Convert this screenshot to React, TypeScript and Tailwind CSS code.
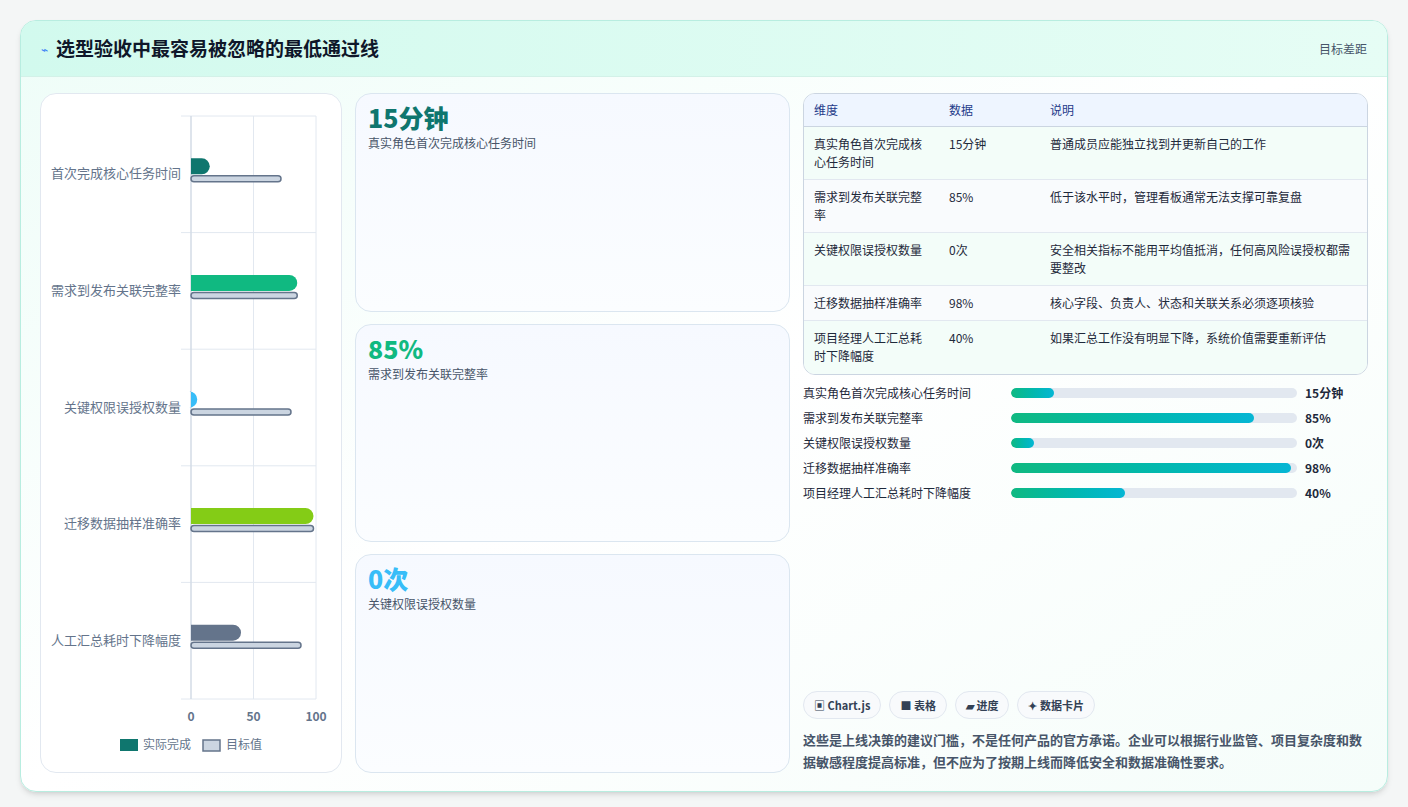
import React from "react";

const rows = [
  { label: "首次完成核心任务时间", a: 15, t: 72, c: "#0f766e" },
  { label: "需求到发布关联完整率", a: 85, t: 85, c: "#10b981" },
  { label: "关键权限误授权数量", a: 5, t: 80, c: "#38bdf8" },
  { label: "迁移数据抽样准确率", a: 98, t: 98, c: "#84cc16" },
  { label: "人工汇总耗时下降幅度", a: 40, t: 88, c: "#64748b" },
];

const table = [
  ["真实角色首次完成核心任务时间", "15分钟", "普通成员应能独立找到并更新自己的工作"],
  ["需求到发布关联完整率", "85%", "低于该水平时，管理看板通常无法支撑可靠复盘"],
  ["关键权限误授权数量", "0次", "安全相关指标不能用平均值抵消，任何高风险误授权都需要整改"],
  ["迁移数据抽样准确率", "98%", "核心字段、负责人、状态和关联关系必须逐项核验"],
  ["项目经理人工汇总耗时下降幅度", "40%", "如果汇总工作没有明显下降，系统价值需要重新评估"],
];

const progress = [
  ["真实角色首次完成核心任务时间", 15, "15分钟"],
  ["需求到发布关联完整率", 85, "85%"],
  ["关键权限误授权数量", 8, "0次"],
  ["迁移数据抽样准确率", 98, "98%"],
  ["项目经理人工汇总耗时下降幅度", 40, "40%"],
] as const;

function Chart() {
  const x0 = 150, sc = 1.25, top = 22, rh = 116.6;
  return (
    <svg width="300" height="678" className="block">
      {[0, 50, 100].map((v) => (
        <line key={v} x1={x0 + v * sc} x2={x0 + v * sc} y1={top} y2={top + rh * 5} stroke="#e2e8f0" />
      ))}
      {[0, 1, 2, 3, 4, 5].map((i) => (
        <line key={i} x1={x0 - 10} x2={x0 + 125} y1={top + i * rh} y2={top + i * rh} stroke="#e2e8f0" />
      ))}
      <line x1={x0} x2={x0} y1={top} y2={top + rh * 5} stroke="#cbd5e1" />
      {rows.map((r, i) => {
        const cy = top + i * rh + rh / 2;
        return (
          <g key={i}>
            <text x={140} y={cy + 4} textAnchor="end" fontSize="13" fill="#64748b">{r.label}</text>
            <path d={`M${x0} ${cy - 16} H${x0 + r.a * sc - 8} A8 8 0 0 1 ${x0 + r.a * sc} ${cy - 8} A8 8 0 0 1 ${x0 + r.a * sc - 8} ${cy} H${x0} Z`} fill={r.c} />
            <rect x={x0} y={cy + 1.5} width={r.t * sc} height={6} rx={3} fill="#cbd5e1" stroke="#64748b" strokeWidth="1.5" />
          </g>
        );
      })}
      {[0, 50, 100].map((v) => (
        <text key={v} x={x0 + v * sc} y={627} textAnchor="middle" fontSize="12" fontWeight="700" fill="#64748b">{v}</text>
      ))}
      <rect x={79} y={645} width={18} height={12} fill="#0f766e" />
      <text x={102} y={655} fontSize="12" fill="#64748b">实际完成</text>
      <rect x={162} y={646} width={17} height={11} fill="#cbd5e1" stroke="#64748b" strokeWidth="1.5" />
      <text x={185} y={655} fontSize="12" fill="#64748b">目标值</text>
    </svg>
  );
}

function Metric({ v, l, c }: { v: string; l: string; c: string }) {
  return (
    <div className="flex-1 rounded-2xl border border-[#dbe6f0] bg-gradient-to-b from-[#f6f9ff] to-[#fbfdff] px-3 pt-1.5">
      <div className={`text-[25px] font-extrabold leading-[34px] ${c}`}>{v}</div>
      <div className="text-[12px] text-[#475569]">{l}</div>
    </div>
  );
}

export default function App() {
  return (
    <div className="w-[1408px] h-[807px] bg-[#f4f6f6] pt-5 px-5" style={{ fontFamily: '"Noto Sans CJK SC", "Noto Sans", sans-serif' }}>
      <div className="h-[772px] rounded-2xl border border-[#b8ede0] bg-gradient-to-br from-[#eefdf8] via-white to-[#f5fdfa] overflow-hidden flex flex-col shadow-md">
        <div className="h-[56px] shrink-0 flex items-center justify-between px-5 bg-gradient-to-r from-[#d2faee] to-[#e6fdf5] border-b border-[#d3f1e8]">
          <div className="flex items-center gap-2">
            <span className="text-[12px] text-[#3b82f6]">⌁</span>
            <span className="text-[19px] font-bold text-[#0f172a]">选型验收中最容易被忽略的最低通过线</span>
          </div>
          <span className="text-[12px] text-[#475569]">目标差距</span>
        </div>
        <div className="flex-1 flex gap-[13px] px-[19px] pt-4 pb-[19px]">
          <div className="w-[302px] shrink-0 rounded-2xl border border-[#e2e8f0] bg-white">
            <Chart />
          </div>
          <div className="w-[435px] shrink-0 flex flex-col gap-3">
            <Metric v="15分钟" l="真实角色首次完成核心任务时间" c="text-[#0f766e]" />
            <Metric v="85%" l="需求到发布关联完整率" c="text-[#10b981]" />
            <Metric v="0次" l="关键权限误授权数量" c="text-[#38bdf8]" />
          </div>
          <div className="flex-1 flex flex-col">
            <div className="rounded-xl border border-[#cbd5e1] overflow-hidden bg-white/70">
              <div className="grid grid-cols-[135px_101px_1fr] h-[33px] items-center bg-[#eef5ff] border-b border-[#cbd5e1] px-[10px] text-[12px] text-[#1e3a8a]">
                <span>维度</span><span>数据</span><span>说明</span>
              </div>
              {table.map((r, i) => (
                <div key={i} className={`grid grid-cols-[135px_101px_1fr] px-[10px] pt-[8px] text-[12px] leading-[18px] text-[#1e293b] ${i < 4 ? "border-b border-[#e2e8f0]" : ""} ${i === 3 ? "h-[35px]" : "h-[53px]"} ${i % 2 === 0 ? "bg-[#f3fdf9]" : "bg-[#f9fbfd]"}`}>
                  <span className="pr-4">{r[0]}</span><span>{r[1]}</span><span>{r[2]}</span>
                </div>
              ))}
            </div>
            <div className="flex flex-col gap-[7px] mt-[9px]">
              {progress.map((p, i) => (
                <div key={i} className="flex items-center h-[18px] text-[12px]">
                  <span className="w-[208px] text-[#1e293b]">{p[0]}</span>
                  <div className="w-[286px] h-[10px] rounded-full bg-[#e2e8f0] overflow-hidden">
                    <div className="h-full rounded-full bg-gradient-to-r from-[#10b981] to-[#06b6d4]" style={{ width: `${p[1]}%` }} />
                  </div>
                  <span className="ml-2 font-bold text-[#1e293b]">{p[2]}</span>
                </div>
              ))}
            </div>
            <div className="flex-1" />
            <div className="flex gap-2 mb-[10px]">
              {["▣ Chart.js", "■ 表格", "▰ 进度", "✦ 数据卡片"].map((t) => (
                <span key={t} className="h-[28px] px-2.5 flex items-center rounded-full border border-[#e2e8f0] bg-[#f8fafc] text-[11px] font-bold text-[#334155]">{t}</span>
              ))}
            </div>
            <p className="text-[13px] font-semibold leading-[22px] text-[#475569]">这些是上线决策的建议门槛，不是任何产品的官方承诺。企业可以根据行业监管、项目复杂度和数据敏感程度提高标准，但不应为了按期上线而降低安全和数据准确性要求。</p>
          </div>
        </div>
      </div>
    </div>
  );
}
